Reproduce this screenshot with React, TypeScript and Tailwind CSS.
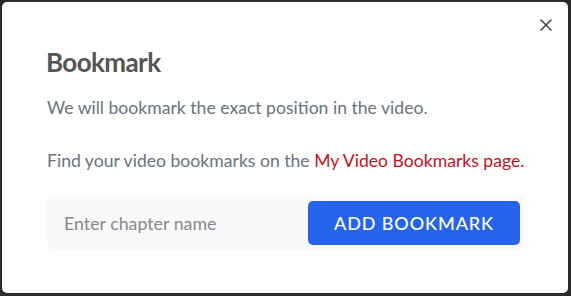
import React from "react";

export default function App() {
  return (
    <div className="w-[571px] h-[296px] bg-[#2b2b2b] pt-[2px] pl-[2px]" style={{ fontFamily: "Lato, 'Noto Sans', sans-serif" }}>
      <div className="relative w-[566px] h-[291px] bg-white rounded-[5px] pl-[45px] pr-[20px] pt-[43px]">
        <button className="absolute right-[15px] top-[16px] text-[#444]" aria-label="close">
          <svg width="14" height="14" viewBox="0 0 14 14" fill="none" stroke="currentColor" strokeWidth="1.6" strokeLinecap="round">
            <path d="M2 2 L12 12 M12 2 L2 12" />
          </svg>
        </button>
        <h2 className="text-[26px] font-bold text-[#555] tracking-[-0.6px] leading-[34px] -ml-[1px]">Bookmark</h2>
        <p className="mt-[16px] text-[17.6px] text-[#6b7280] leading-[26px] whitespace-nowrap">We will bookmark the exact position in the video.</p>
        <p className="mt-[27px] text-[17.6px] text-[#6b7280] leading-[26px] whitespace-nowrap">
          Find your video bookmarks on the <span className="text-[#cc0f1c]">My Video Bookmarks page.</span>
        </p>
        <div className="mt-[22px] w-[478px] h-[54px] bg-[#f8f9fb] rounded-[6px] flex items-center pl-[17px] pr-[5px]">
          <input
            className="flex-1 min-w-0 bg-transparent outline-none text-[17.8px] text-[#555] placeholder:text-[#888]"
            placeholder="Enter chapter name"
          />
          <button className="w-[212px] h-[44px] bg-[#2563eb] rounded-[5px] text-white text-[18px] tracking-[0.9px] font-medium">
            ADD BOOKMARK
          </button>
        </div>
      </div>
    </div>
  );
}
